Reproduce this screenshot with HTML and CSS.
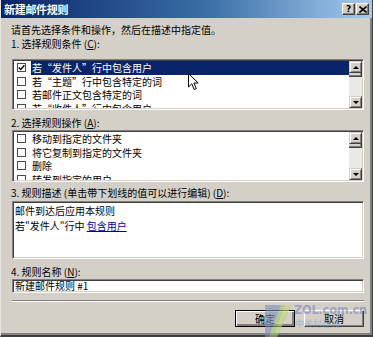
FILE: index.html
```html
<!DOCTYPE html>
<html lang="zh-CN">
<head>
  <meta charset="UTF-8" />
  <title>新建邮件规则</title>
  <link rel="stylesheet" href="styles.css">
</head>
<body>

  <div class="window">
    <!-- title bar -->
    <div class="titlebar">
      <span class="title">新建邮件规则</span>
      <div class="tbtns">
        <span class="tbtn">?</span>
        <span class="tbtn">
          <svg width="8" height="7" viewBox="0 0 8 7"><path d="M0.5 0.5 L7.5 6.5 M7.5 0.5 L0.5 6.5" stroke="#000" stroke-width="1.6"/></svg>
        </span>
      </div>
    </div>

    <div class="content">
      <p class="intro">请首先选择条件和操作，然后在描述中指定值。</p>

      <p class="label l1">1. 选择规则条件 (<u>C</u>):</p>
      <div class="listbox lb1">
        <ul class="items">
          <li class="sel"><span class="cb"><svg width="7" height="7" viewBox="0 0 7 7"><path d="M0.8 3.4 L2.8 5.4 L6.4 1.2" fill="none" stroke="#000" stroke-width="1.4"/></svg></span><span class="txt">若“发件人”行中包含用户</span></li>
          <li><span class="cb"></span><span class="txt">若“主题”行中包含特定的词</span></li>
          <li><span class="cb"></span><span class="txt">若邮件正文包含特定的词</span></li>
          <li><span class="cb"></span><span class="txt">若“收件人”行中包含用户</span></li>
        </ul>
        <div class="scroll">
          <span class="sbtn up"></span>
          <span class="thumb"></span>
          <span class="track"></span>
          <span class="sbtn down"></span>
        </div>
      </div>

      <p class="label l2">2. 选择规则操作 (<u>A</u>):</p>
      <div class="listbox lb2">
        <ul class="items">
          <li><span class="cb"></span><span class="txt">移动到指定的文件夹</span></li>
          <li><span class="cb"></span><span class="txt">将它复制到指定的文件夹</span></li>
          <li><span class="cb"></span><span class="txt">删除</span></li>
          <li><span class="cb"></span><span class="txt">转发到指定的用户</span></li>
        </ul>
        <div class="scroll">
          <span class="sbtn up"></span>
          <span class="thumb"></span>
          <span class="track"></span>
          <span class="sbtn down"></span>
        </div>
      </div>

      <p class="label l3">3. 规则描述 (单击带下划线的值可以进行编辑) (<u>D</u>):</p>
      <div class="desc">
        <div>邮件到达后应用本规则</div>
        <div>若"发件人"行中 <a href="#">包含用户</a></div>
      </div>

      <p class="label l4">4. 规则名称 (<u>N</u>):</p>
      <div class="namefield">新建邮件规则 #1</div>

      <div class="separator"></div>

      <div class="actions">
        <button class="btn default">确定</button>
        <button class="btn">取消</button>
      </div>
    </div>

    <!-- watermark over the buttons -->
    <div class="watermark">
      <svg class="wm-logo" width="30" height="34" viewBox="0 0 30 34">
        <polygon points="2,2 28,2 14,34 2,34" fill="#7f8db8"/>
        <polygon points="18,2 28,2 14,34 6,34" fill="#9cc87a"/>
        <polygon points="22,2 28,2 16,30 12,30" fill="#c8d870"/>
      </svg>
      <span class="wm-text">ZOL.com.cn</span>
      <span class="wm-sub">中关村在线</span>
    </div>

    <!-- mouse pointer -->
    <svg class="cursor" width="12" height="18" viewBox="0 0 12 18">
      <path d="M0.5 0.5 L0.5 14 L3.8 10.8 L6.2 16.5 L8.3 15.6 L5.9 10 L10.2 10 Z" fill="#fff" stroke="#000" stroke-width="1"/>
    </svg>
  </div>

</body>
</html>
```

FILE: styles.css
```css
* {
  box-sizing: border-box;
}
html, body {
  margin: 0;
  padding: 0;
}
body {
  width: 373px;
  height: 337px;
  overflow: hidden;
  background-color: #d4d0c8;
  font-family: "Noto Sans CJK SC", "Liberation Sans", sans-serif;
  font-size: 10px;
  color: #000;
}
.window {
  position: relative;
  height: 337px;
  border-right: 1px solid #404040;
  border-bottom: 2px solid #404040;
  border-left: 1px solid #e6e4de;
  box-shadow: inset -2px -2px #808080;
}
.titlebar {
  height: 18px;
  display: flex;
  align-items: center;
  justify-content: space-between;
  padding: 0 3px 0 3px;
  background: linear-gradient(to right, #0a246a, #3a6ea5 55%, #a6caf0);
}
.title {
  color: #fff;
  font-weight: bold;
  font-size: 11px;
  line-height: 14px;
  letter-spacing: -0.3px;
}
.tbtns {
  display: flex;
  gap: 1px;
}
.tbtn {
  width: 13px;
  height: 12px;
  display: flex;
  align-items: center;
  justify-content: center;
  background: #d4d0c8;
  border: 1px solid;
  border-color: #fff #404040 #404040 #fff;
  box-shadow: inset -1px -1px #808080;
  font-family: "DejaVu Sans", sans-serif;
  font-weight: bold;
  font-size: 9px;
  line-height: 9px;
}
.content {
  padding: 5px 8px 0 10px;
}
.intro, .label {
  margin: 0;
  line-height: 14px;
  white-space: nowrap;
}
.label u {
  text-decoration: underline;
  text-underline-offset: 1px;
}
.l2 { margin-top: 6px; }
.l3 { margin-top: 4px; }
.l4 { margin-top: 6px; }

.listbox {
  display: flex;
  margin-left: 1px;
  background: #fff;
  border: 1px solid;
  border-color: #808080 #fff #fff #808080;
  box-shadow: inset 1px 1px #404040, inset -1px -1px #d4d0c8;
  padding: 1px;
  overflow: hidden;
}
.lb1 {
  margin-top: 8px;
  height: 51px;
}
.lb2 {
  height: 52px;
}
.items {
  flex: 1;
  list-style: none;
  margin: 0;
  padding: 0;
  overflow: hidden;
}
.items li {
  display: flex;
  align-items: center;
  height: 13.5px;
  white-space: nowrap;
}
.cb {
  width: 9px;
  height: 9px;
  margin: 0 5px 0 3px;
  flex: none;
  display: flex;
  align-items: center;
  justify-content: center;
  border: 1px solid #4a4a4a;
  background: #fff;
}
.txt {
  flex: 1;
  height: 100%;
  padding-left: 1px;
  line-height: 13.5px;
}
.sel .txt {
  background: #0a246a;
  color: #fff;
}
.scroll {
  width: 13px;
  display: flex;
  flex-direction: column;
  background: #ebe9e4;
}
.sbtn {
  height: 12px;
  flex: none;
  background: #d4d0c8;
  border: 1px solid;
  border-color: #d4d0c8 #404040 #404040 #d4d0c8;
  box-shadow: inset 1px 1px #fff, inset -1px -1px #808080;
  display: flex;
  align-items: center;
  justify-content: center;
}
.sbtn::after {
  content: "";
  border-left: 3px solid transparent;
  border-right: 3px solid transparent;
}
.up::after {
  border-bottom: 3px solid #000;
}
.down::after {
  border-top: 3px solid #000;
}
.thumb {
  height: 4px;
  flex: none;
  background: #d4d0c8;
  border-bottom: 1px solid #404040;
  border-right: 1px solid #404040;
  box-shadow: inset -1px -1px #808080;
}
.track {
  flex: 1;
}

.desc {
  margin: 1px 0 0 1px;
  height: 58px;
  background: #fff;
  border: 1px solid;
  border-color: #808080 #fff #fff #808080;
  box-shadow: inset 1px 1px #404040, inset -1px -1px #d4d0c8;
  padding: 1px 2px;
  line-height: 15px;
}
.desc a {
  color: #0000a8;
  text-decoration: underline;
}
.namefield {
  margin-left: 1px;
  height: 14px;
  background: #fff;
  border: 1px solid;
  border-color: #808080 #fff #fff #808080;
  box-shadow: inset 1px 1px #404040, inset -1px -1px #d4d0c8;
  padding: 0 2px;
  line-height: 12px;
  white-space: nowrap;
}
.separator {
  margin: 7px 0 0 1px;
  height: 2px;
  border-top: 1px solid #808080;
  border-bottom: 1px solid #fff;
}
.actions {
  display: flex;
  justify-content: flex-end;
  gap: 9px;
  margin-top: 8px;
}
.btn {
  width: 60px;
  height: 17px;
  padding: 0;
  font-family: inherit;
  font-size: 10px;
  line-height: 13px;
  color: #000;
  background: #d4d0c8;
  border: 1px solid;
  border-color: #fff #404040 #404040 #fff;
  box-shadow: inset -1px -1px #808080;
}
.btn.default {
  border-color: #000;
  box-shadow: inset 1px 1px #fff, inset -2px -2px #808080;
}

.watermark {
  position: absolute;
  left: 262px;
  top: 302px;
  width: 106px;
  height: 35px;
  pointer-events: none;
}
.wm-logo {
  position: absolute;
  left: 0;
  top: 1px;
  opacity: 0.6;
}
.wm-text {
  position: absolute;
  left: 31px;
  top: 1px;
  font-family: "DejaVu Sans", sans-serif;
  font-weight: bold;
  font-size: 11.5px;
  line-height: 14px;
  color: rgba(110, 125, 185, 0.55);
  letter-spacing: -0.3px;
}
.wm-sub {
  position: absolute;
  left: 32px;
  top: 17px;
  font-size: 9px;
  line-height: 10px;
  color: rgba(120, 160, 220, 0.5);
}
.cursor {
  position: absolute;
  left: 187px;
  top: 73px;
}
```
